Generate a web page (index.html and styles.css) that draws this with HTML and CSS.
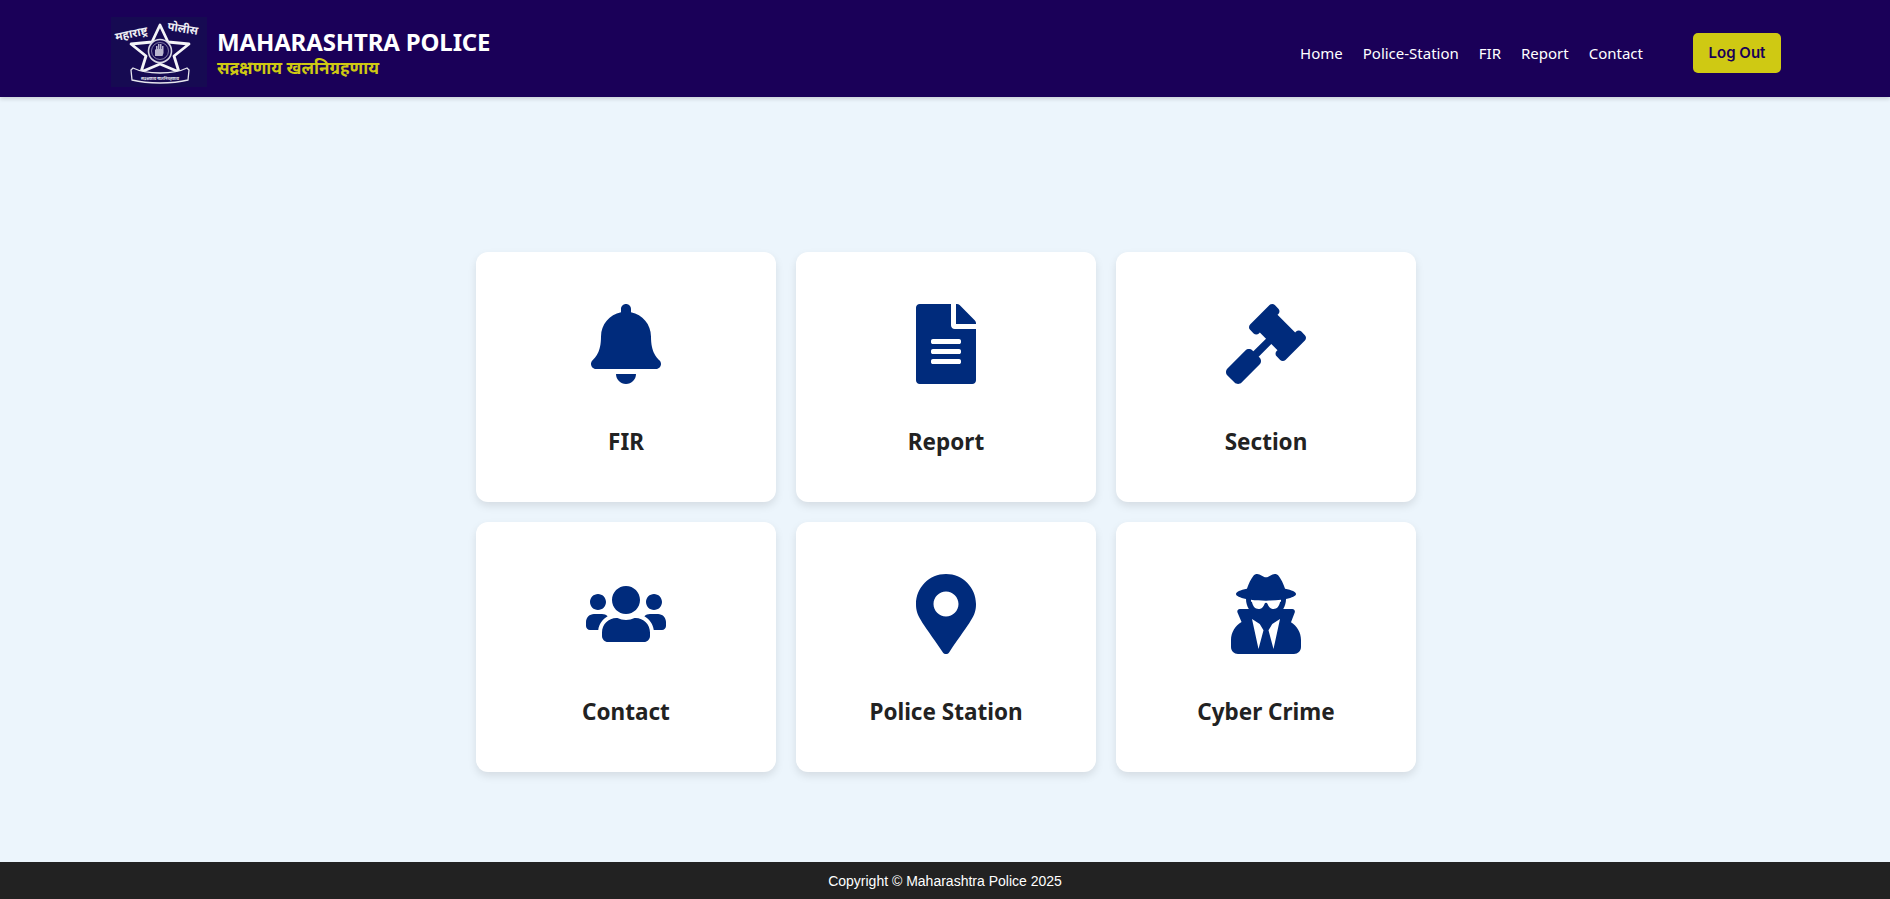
FILE: index.html
```html
<!DOCTYPE html>
<html>

<head>
    <meta charset="UTF-8">
    <link rel="stylesheet" href="styles.css">
    <title>Maharashtra Police</title>
</head>

<body>
    <nav class="navbar">
        <a class="brand" href="#">
            <svg class="logo" viewBox="1 7 96 70">
                <rect x="1" y="7" width="96" height="70" fill="#160a52" />
                <text class="logo-text" transform="translate(6 31) rotate(-12)">महाराष्ट्र</text>
                <text class="logo-text" transform="translate(57 20) rotate(9)">पोलीस</text>
                <polygon points="50,15 58,32 79,34 64,46 69,62 50,54 31,62 36,46 21,34 42,32" fill="#160a52" stroke="#f4f4f8" stroke-width="2.800" stroke-linejoin="round" />
                <circle cx="50" cy="41" r="11.500" fill="#160a52" stroke="#d8d8e4" stroke-width="1.600" />
                <circle cx="50" cy="41" r="8.500" fill="none" stroke="#9a96b8" stroke-width="0.800" />
                <path d="M45 46v-6l1-1v-3h1.500v3h.5v-5h1.500v5h.5v-5h1.500v5h.5v-3h1.500v7l-1 3z" fill="#b9b6cf" />
                <path d="M23 58c8 4 16 5 27 5s19-1 27-5l2 2-1 10c-8 2-18 3-28 3s-20-1-28-3l-1-10z" fill="#160a52" stroke="#e6e6ee" stroke-width="1.300" />
                <text class="logo-motto" x="50" y="69.500" text-anchor="middle">सद्रक्षणाय खलनिग्रहणाय</text>
            </svg>
            <span class="brand-text">
                <span class="brand-title">MAHARASHTRA POLICE</span>
                <span class="brand-tag">सद्रक्षणाय खलनिग्रहणाय</span>
            </span>
        </a>
        <div class="nav-links">
            <a href="#">Home</a>
            <a href="#">Police-Station</a>
            <a href="#">FIR</a>
            <a href="#">Report</a>
            <a href="#">Contact</a>
        </div>
        <button class="logout">Log Out</button>
    </nav>

    <main class="content">
        <div class="card-grid">
            <a class="card" href="#">
                <svg class="icon" viewBox="0 0 448 512"><path d="M224 512c35.32 0 63.97-28.65 63.97-64H160.03c0 35.35 28.65 64 63.97 64zm215.39-149.71c-19.32-20.76-55.47-51.99-55.47-154.29 0-77.7-54.48-139.9-127.94-155.16V32c0-17.67-14.32-32-31.98-32s-31.98 14.33-31.98 32v20.84C118.56 68.1 64.08 130.3 64.08 208c0 102.3-36.15 133.53-55.47 154.29-6 6.45-8.66 14.16-8.61 21.71.11 16.4 12.98 32 32.1 32h383.8c19.12 0 32-15.6 32.1-32 .05-7.55-2.61-15.27-8.61-21.71z" /></svg>
                <h3>FIR</h3>
            </a>
            <a class="card" href="#">
                <svg class="icon" viewBox="0 0 384 512"><path d="M224 136V0H24C10.7 0 0 10.7 0 24v464c0 13.3 10.7 24 24 24h336c13.3 0 24-10.7 24-24V160H248c-13.2 0-24-10.800-24-24zm64 236c0 6.600-5.400 12-12 12H108c-6.600 0-12-5.400-12-12v-8c0-6.600 5.400-12 12-12h168c6.600 0 12 5.400 12 12v8zm0-64c0 6.600-5.400 12-12 12H108c-6.600 0-12-5.400-12-12v-8c0-6.600 5.400-12 12-12h168c6.600 0 12 5.400 12 12v8zm0-72v8c0 6.600-5.400 12-12 12H108c-6.600 0-12-5.400-12-12v-8c0-6.600 5.400-12 12-12h168c6.600 0 12 5.400 12 12zm96-114.100v6.100H256V0h6.100c6.400 0 12.500 2.500 17 7l97.900 98c4.500 4.500 7 10.600 7 16.900z" /></svg>
                <h3>Report</h3>
            </a>
            <a class="card" href="#">
                <svg class="icon" viewBox="0 0 512 512"><path d="M504.971 199.362l-22.627-22.627c-9.373-9.373-24.569-9.373-33.941 0l-5.657 5.657L329.608 69.255l5.657-5.657c9.373-9.373 9.373-24.569 0-33.941L312.638 7.029c-9.373-9.373-24.569-9.373-33.941 0L154.246 131.48c-9.373 9.373-9.373 24.569 0 33.941l22.627 22.627c9.373 9.373 24.569 9.373 33.941 0l5.657-5.657 39.598 39.598-81.04 81.04-5.657-5.657c-12.497-12.497-32.758-12.497-45.255 0L9.373 412.118c-12.497 12.497-12.497 32.758 0 45.255l45.255 45.255c12.497 12.497 32.758 12.497 45.255 0l114.745-114.745c12.497-12.497 12.497-32.758 0-45.255l-5.657-5.657 81.04-81.04 39.598 39.598-5.657 5.657c-9.373 9.373-9.373 24.569 0 33.941l22.627 22.627c9.373 9.373 24.569 9.373 33.941 0l124.451-124.451c9.372-9.372 9.372-24.568 0-33.941z" /></svg>
                <h3>Section</h3>
            </a>
            <a class="card" href="#">
                <svg class="icon" viewBox="0 0 640 512"><path d="M96 224c35.300 0 64-28.700 64-64s-28.700-64-64-64-64 28.700-64 64 28.700 64 64 64zm448 0c35.300 0 64-28.700 64-64s-28.700-64-64-64-64 28.700-64 64 28.700 64 64 64zm32 32h-64c-17.600 0-33.500 7.100-45.100 18.600 40.300 22.100 68.900 62 75.100 109.400h66c17.700 0 32-14.300 32-32v-32c0-35.300-28.700-64-64-64zm-256 0c61.900 0 112-50.100 112-112S381.900 32 320 32 208 82.100 208 144s50.100 112 112 112zm76.800 32h-8.300c-20.800 10-43.900 16-68.500 16s-47.600-6-68.500-16h-8.300C179.600 288 128 339.600 128 403.200V432c0 26.500 21.500 48 48 48h288c26.500 0 48-21.500 48-48v-28.800c0-63.600-51.600-115.200-115.200-115.200zm-223.700-13.400C161.500 263.100 145.600 256 128 256H64c-35.300 0-64 28.700-64 64v32c0 17.700 14.300 32 32 32h65.900c6.300-47.400 34.900-87.300 75.200-109.400z" /></svg>
                <h3>Contact</h3>
            </a>
            <a class="card" href="#">
                <svg class="icon" viewBox="0 0 384 512"><path d="M172.268 501.670C26.970 291.031 0 268.413 0 192 0 85.961 85.961 0 192 0s192 85.961 192 192c0 76.413-26.970 99.031-172.268 309.670-9.535 13.774-29.930 13.773-39.464 0zM192 272c44.183 0 80-35.817 80-80s-35.817-80-80-80-80 35.817-80 80 35.817 80 80 80z" /></svg>
                <h3>Police Station</h3>
            </a>
            <a class="card" href="#">
                <svg class="icon" viewBox="0 0 448 512"><path d="M383.900 308.300l23.900-62.600c4-10.500-3.700-21.700-15-21.700h-58.500c11-18.900 17.800-40.600 17.800-64v-.3c39.200-7.800 64-19.100 64-31.700 0-13.300-27.300-25.100-70.100-33-9.200-32.800-27-65.800-40.600-82.800-9.500-11.900-25.900-15.600-39.500-8.800l-27.600 13.800c-9 4.500-19.600 4.500-28.600 0L182.100 3.400c-13.600-6.800-30-3.100-39.500 8.800-13.500 17-31.400 50-40.600 82.800-42.700 7.900-70 19.700-70 33 0 12.600 24.800 23.900 64 31.700v.3c0 23.400 6.800 45.100 17.800 64H56.300c-11.500 0-19.200 11.700-14.700 22.300l25.800 60.200C27.300 329.800 0 372.700 0 422.400v44.800C0 491.900 20.100 512 44.800 512h358.400c24.700 0 44.800-20.100 44.800-44.800v-44.800c0-48.400-25.800-90.400-64.100-114.100zM176 480l-41.600-192 49.600 32 24 40-32 120zm96 0l-32-120 24-40 49.600-32L272 480zm41.700-298.500c-3.900 11.900-7 24.600-16.500 33.400-10.100 9.300-48 22.400-64-25-2.800-8.400-15.400-8.400-18.300 0-17 50.200-56 32.400-64 25-9.500-8.800-12.700-21.500-16.500-33.400-.8-2.500-6.300-5.700-6.300-5.800v-10.800c28.300 3.600 61 5.800 96 5.800s67.700-2.100 96-5.800v10.800c-.1.1-5.600 3.200-6.400 5.800z" /></svg>
                <h3>Cyber Crime</h3>
            </a>
        </div>
    </main>

    <footer class="footer">Copyright © Maharashtra Police 2025</footer>
</body>

</html>
```
FILE: styles.css
```css
* {
    box-sizing: border-box;
}

body {
    margin: 0;
    min-height: 100vh;
    display: flex;
    flex-direction: column;
    background: #ecf5fc;
    font-family: "Noto Sans", "Open Sans", sans-serif;
}

a {
    text-decoration: none;
}

.navbar {
    height: 97px;
    padding: 7px 109px 0 111px;
    display: flex;
    align-items: center;
    background: #1a0058;
    box-shadow: 0 2px 4px rgba(0, 0, 0, 0.15);
}

.brand {
    display: flex;
    align-items: center;
    gap: 10px;
    margin-right: auto;
}

.logo {
    width: 96px;
    height: 70px;
}

.logo-text {
    font: bold 11.500px "Noto Sans", sans-serif;
    fill: #eeeef4;
}

.logo-motto {
    font: bold 4px "Noto Sans", sans-serif;
    fill: #e6e6ee;
}

.brand-text {
    display: flex;
    flex-direction: column;
    gap: 3px;
}

.brand-title {
    font-size: 24px;
    font-weight: 700;
    line-height: 27px;
    letter-spacing: -0.15px;
    color: #fff;
}

.brand-tag {
    font-size: 17px;
    font-weight: 700;
    line-height: 19px;
    color: #cfc913;
}

.nav-links {
    display: flex;
    gap: 20px;
    margin-right: 50px;
    margin-top: 2px;
}

.nav-links a {
    font-size: 15px;
    color: #fff;
}

.logout {
    width: 88px;
    height: 40px;
    margin-top: 1px;
    border: none;
    border-radius: 5px;
    background: #cfc913;
    color: #1a0058;
    font: 600 15px Inter, sans-serif;
}

.content {
    flex: 1;
    padding: 155px 0 0 2px;
    display: flex;
    justify-content: center;
}

.card-grid {
    display: grid;
    grid-template-columns: repeat(3, 300px);
    grid-auto-rows: 250px;
    gap: 20px;
}

.card {
    padding-top: 52px;
    display: flex;
    flex-direction: column;
    align-items: center;
    background: #fff;
    border-radius: 12px;
    box-shadow: 0 4px 8px rgba(0, 0, 0, 0.1);
}

.icon {
    width: 80px;
    height: 80px;
    fill: #002b7c;
}

.card h3 {
    margin: 42px 0 0;
    font-size: 22.500px;
    font-weight: 700;
    line-height: 32px;
    color: #222;
}

.footer {
    height: 37px;
    display: flex;
    align-items: center;
    justify-content: center;
    background: #222;
    color: #fff;
    font: 14px "Liberation Sans", Arial, sans-serif;
}
```
